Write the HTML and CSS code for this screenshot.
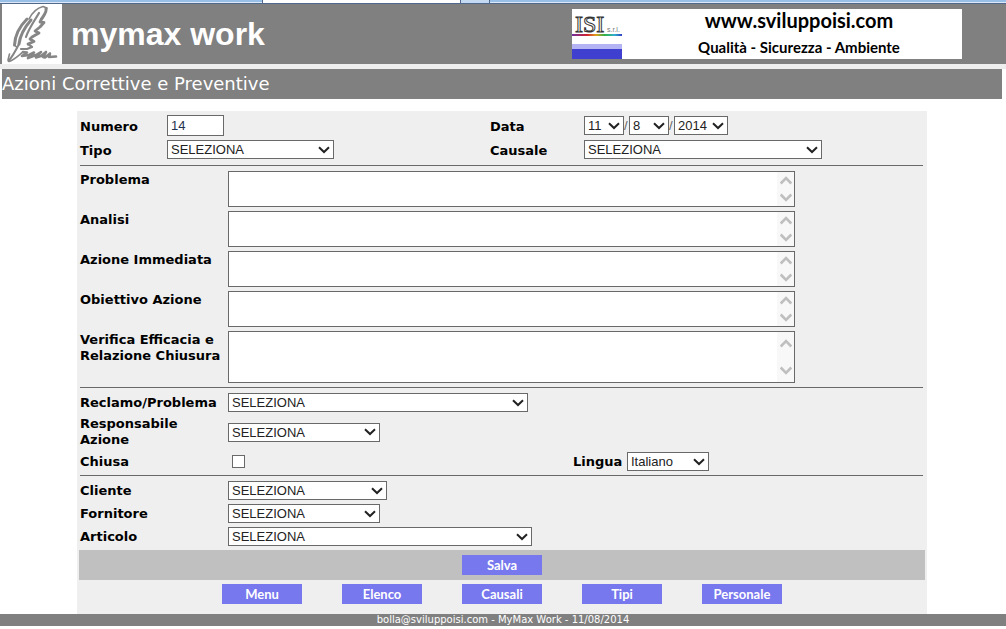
FILE: index.html
```html
<!DOCTYPE html>
<html lang="it">
<head>
<meta charset="utf-8">
<title>mymax work - Azioni Correttive e Preventive</title>
<link rel="stylesheet" href="styles.css">
</head>
<body>
<div class="chrome"><span class="chrome-tab"></span><span class="chrome-next"></span></div>
<header class="header">
  <svg class="logo" viewBox="0 0 60 60" aria-label="mymax" role="img">
    <rect width="60" height="60" fill="#fff"/>
    <g fill="none" stroke="#868686" stroke-linecap="round" stroke-linejoin="round">
      <path stroke-width="1.6" d="M27 15C30 9 35 4 41 2.500L45 4"/>
      <path stroke-width="3" d="M44 4.500C45 8 42 11 39.500 15"/>
      <path stroke-width="2.8" d="M39.500 15 38 18 42 18.500 38 23 33 27 37 29 30 33 28 35 32 37.500 26 40"/>
      <path stroke-width="2.200" d="M26 40 30 43 25 45 19 45"/>
      <path stroke-width="3" d="M25 15C17 23 13 31 12.500 41"/>
      <path stroke-width="1.600" d="M12.500 41 15 43.500"/>
      <path stroke-width="3" d="M29 16C22 24 18 32 17 40"/>
      <path stroke-width="2.200" d="M37 9C33 16 27 24 24 33"/>
      <path stroke-width="2" d="M17 40C14 46 11 52 6.500 57"/>
      <path stroke-width="1.600" d="M7.500 50 6 56M7 57.500C12 56 17 51 21 48"/>
      <path stroke-width="2.600" d="M21 48 25 48.500 20 52M20 52 27 51 32 48.500 26 54M26 54 34 51 39 48 34 53.500 39 52 44 48 41 53 43 53.500 48 49.500 47 53 54 52.500"/>
    </g>
  </svg>
  <h1 class="brand">mymax work</h1>
  <div class="banner">
    <svg class="isi" viewBox="0 0 50 50" aria-hidden="true">
      <defs><linearGradient id="rainbow"><stop offset="0" stop-color="#7030a0"/><stop offset=".3" stop-color="#d02030"/><stop offset=".48" stop-color="#e0a020"/><stop offset=".65" stop-color="#30b040"/><stop offset=".85" stop-color="#30b0d0"/><stop offset="1" stop-color="#3040c0"/></linearGradient></defs>
      <text class="isi-name" x="3" y="23">ISI</text>
      <text class="isi-srl" x="35" y="23">s.r.l.</text>
      <rect y="25" width="50" height="2" fill="url(#rainbow)"/>
      <rect y="35" width="50" height="5" fill="#b4b4f4"/>
      <rect y="40" width="50" height="10" fill="#4040d0"/>
    </svg>
    <div class="banner-text">
      <span class="banner-site">www.sviluppoisi.com</span>
      <span class="banner-tag">Qualità - Sicurezza - Ambiente</span>
    </div>
  </div>
</header>
<main class="page">
  <h2 class="title">Azioni Correttive e Preventive</h2>
  <form class="panel">
    <div class="section top">
      <label for="numero">Numero</label>
      <input class="field number" id="numero" type="text" value="14">
      <label for="giorno">Data</label>
      <div class="date">
        <select class="field day" id="giorno"><option>11</option></select><span class="slash">/</span><select class="field day" aria-label="Mese"><option>8</option></select><span class="slash">/</span><select class="field year" aria-label="Anno"><option>2014</option></select>
      </div>
      <label for="tipo">Tipo</label>
      <select class="field tipo" id="tipo"><option>SELEZIONA</option></select>
      <label for="causale">Causale</label>
      <select class="field causale" id="causale"><option>SELEZIONA</option></select>
    </div>
    <hr class="rule">
    <div class="section rows texts">
      <label for="problema">Problema</label><textarea class="area" id="problema"></textarea>
      <label for="analisi">Analisi</label><textarea class="area" id="analisi"></textarea>
      <label for="immediata">Azione Immediata</label><textarea class="area" id="immediata"></textarea>
      <label for="obiettivo">Obiettivo Azione</label><textarea class="area" id="obiettivo"></textarea>
      <label for="verifica">Verifica Efficacia e<br>Relazione Chiusura</label><textarea class="area tall" id="verifica"></textarea>
    </div>
    <hr class="rule">
    <div class="section rows">
      <label for="reclamo">Reclamo/Problema</label><select class="field reclamo" id="reclamo"><option>SELEZIONA</option></select>
      <label for="responsabile">Responsabile<br>Azione</label><select class="field medium" id="responsabile"><option>SELEZIONA</option></select>
      <label for="chiusa">Chiusa</label>
      <div class="closing">
        <input class="check" id="chiusa" type="checkbox">
        <label for="lingua">Lingua</label>
        <select class="field lingua" id="lingua"><option>Italiano</option></select>
      </div>
    </div>
    <hr class="rule">
    <div class="section rows">
      <label for="cliente">Cliente</label><select class="field cliente" id="cliente"><option>SELEZIONA</option></select>
      <label for="fornitore">Fornitore</label><select class="field medium" id="fornitore"><option>SELEZIONA</option></select>
      <label for="articolo">Articolo</label><select class="field articolo" id="articolo"><option>SELEZIONA</option></select>
    </div>
    <div class="save-bar"><button class="btn" type="button">Salva</button></div>
    <nav class="actions">
      <button class="btn" type="button">Menu</button>
      <button class="btn" type="button">Elenco</button>
      <button class="btn" type="button">Causali</button>
      <button class="btn" type="button">Tipi</button>
      <button class="btn" type="button">Personale</button>
    </nav>
  </form>
</main>
<footer class="footer">bolla@sviluppoisi.com - MyMax Work - 11/08/2014</footer>
</body>
</html>
```
FILE: styles.css
```css
* {
  box-sizing: border-box;
}

body {
  margin: 0;
  background: #fff;
  color: #000;
  font-family: "DejaVu Sans", Verdana, sans-serif;
  font-size: 13px;
  line-height: 16px;
}

.chrome {
  display: flex;
  height: 4px;
  padding-left: 262px;
  background: #98bfe8;
  border-bottom: 1px solid #50688c;
  box-shadow: inset 0 -1px #dce9f7;
}

.chrome-tab {
  width: 198px;
  background: #fff;
  border-left: 1px solid #50688c;
}

.chrome-next {
  width: 30px;
  background: #c4daf2;
  border-left: 1px solid #50688c;
  border-right: 1px solid #50688c;
}

.header {
  display: flex;
  align-items: center;
  padding: 0 44px 0 2px;
  background: #808080;
}

.logo {
  width: 60px;
  height: 60px;
}

.brand {
  flex: 1;
  margin: 0 0 0 9px;
  color: #fff;
  font: bold 32px/36px "Liberation Sans", Arial, sans-serif;
}

.banner {
  display: flex;
  width: 390px;
  height: 50px;
  background: #fff;
}

.isi {
  width: 50px;
  height: 50px;
}

.isi-name {
  font: 24px "Liberation Serif", serif;
  fill: #fff;
  stroke: #333;
  stroke-width: 1;
}

.isi-srl {
  font: 7px "Liberation Sans", sans-serif;
  fill: #777;
}

.banner-text {
  display: flex;
  flex: 1;
  flex-direction: column;
  align-items: center;
  padding-left: 14px;
  font-family: Lato, "Open Sans", sans-serif;
  font-weight: bold;
}

.banner-site {
  font-size: 20px;
  line-height: 22px;
}

.banner-tag {
  font-size: 15px;
  line-height: 32px;
}

.page {
  padding: 0 4px 0 2px;
  border-top: 5px solid #eee;
}

.title {
  margin: 0 0 12px;
  background: #808080;
  color: #fff;
  font-size: 18px;
  font-weight: normal;
  line-height: 30px;
}

.panel {
  max-width: 850px;
  margin: 0 auto;
  padding: 4px 0 10px;
  background: #efefef;
}

.section {
  display: grid;
  gap: 4px 0;
  align-items: center;
  padding: 0 4px 0 3px;
}

.section label {
  font-weight: bold;
}

.top {
  grid-template-columns: 87px 323px 94px 1fr;
  padding-bottom: 2px;
}

.top label {
  padding-top: 2px;
}

.rows {
  grid-template-columns: 148px 1fr;
}

.texts {
  align-items: start;
}

.texts label {
  padding-top: 1px;
}

.rule {
  height: 1px;
  margin: 4px 4px 5px 3px;
  border: 0;
  background: #696969;
}

.field {
  height: 19px;
  margin: 0;
  padding: 0 18px 0 3px;
  border: 1px solid #696969;
  border-radius: 0;
  background-color: #fff;
  color: #222;
  font: 13px "Liberation Sans", Arial, sans-serif;
  appearance: none;
}

select.field {
  background-image: url("data:image/svg+xml,%3Csvg xmlns='http://www.w3.org/2000/svg' width='12' height='8'%3E%3Cpath d='M1 1.2 6 6 11 1.2' fill='none' stroke='%23222' stroke-width='2'/%3E%3C/svg%3E");
  background-repeat: no-repeat;
  background-position: right 3px center;
}

.number {
  width: 57px;
  height: 21px;
  padding-right: 3px;
  color: #1f3350;
}

.date {
  display: flex;
  align-items: center;
  color: #666;
  font: 13px "Liberation Sans", Arial, sans-serif;
}

.slash {
  width: 5px;
}

.day {
  width: 40px;
}

.year {
  width: 54px;
}

.tipo {
  width: 167px;
}

.causale {
  width: 238px;
}

.reclamo {
  width: 300px;
}

.medium {
  width: 152px;
}

.cliente {
  width: 159px;
}

.articolo {
  width: 304px;
}

.lingua {
  width: 82px;
}

.area {
  width: 100%;
  max-width: 567px;
  height: 36px;
  margin: 0;
  border: 1px solid #696969;
  background:
    url("data:image/svg+xml,%3Csvg xmlns='http://www.w3.org/2000/svg' width='12' height='9'%3E%3Cpath d='M.7 7.500 6 2 11.300 7.500' fill='none' stroke='%23bfbfbf' stroke-width='2.600'/%3E%3C/svg%3E") right 2px top 16% no-repeat,
    url("data:image/svg+xml,%3Csvg xmlns='http://www.w3.org/2000/svg' width='12' height='9'%3E%3Cpath d='M.7 1.500 6 7 11.300 1.500' fill='none' stroke='%23bfbfbf' stroke-width='2.600'/%3E%3C/svg%3E") right 2px top 82% no-repeat,
    linear-gradient(#f8f8f8, #f8f8f8) right / 17px 100% no-repeat,
    #fff;
  overflow: hidden;
  resize: none;
}

.tall {
  height: 52px;
}

.closing {
  display: grid;
  grid-template-columns: 345px 54px 1fr;
  align-items: center;
}

.check {
  width: 13px;
  height: 13px;
  margin: 0 0 0 4px;
  border: 1px solid #696969;
  background: #fff;
  appearance: none;
}

.check:checked {
  background: #222;
}

.save-bar {
  display: flex;
  justify-content: center;
  margin: 4px 2px;
  padding: 5px;
  background: #c0c0c0;
}

.actions {
  display: flex;
  justify-content: center;
  gap: 40px;
}

.btn {
  width: 80px;
  height: 20px;
  padding: 0;
  border: 0;
  background: #7777ee;
  color: #fff;
  font: bold 13px/20px Lato, "Open Sans", sans-serif;
}

.footer {
  background: #808080;
  color: #fff;
  font-size: 10px;
  line-height: 12px;
  text-align: center;
}
```
